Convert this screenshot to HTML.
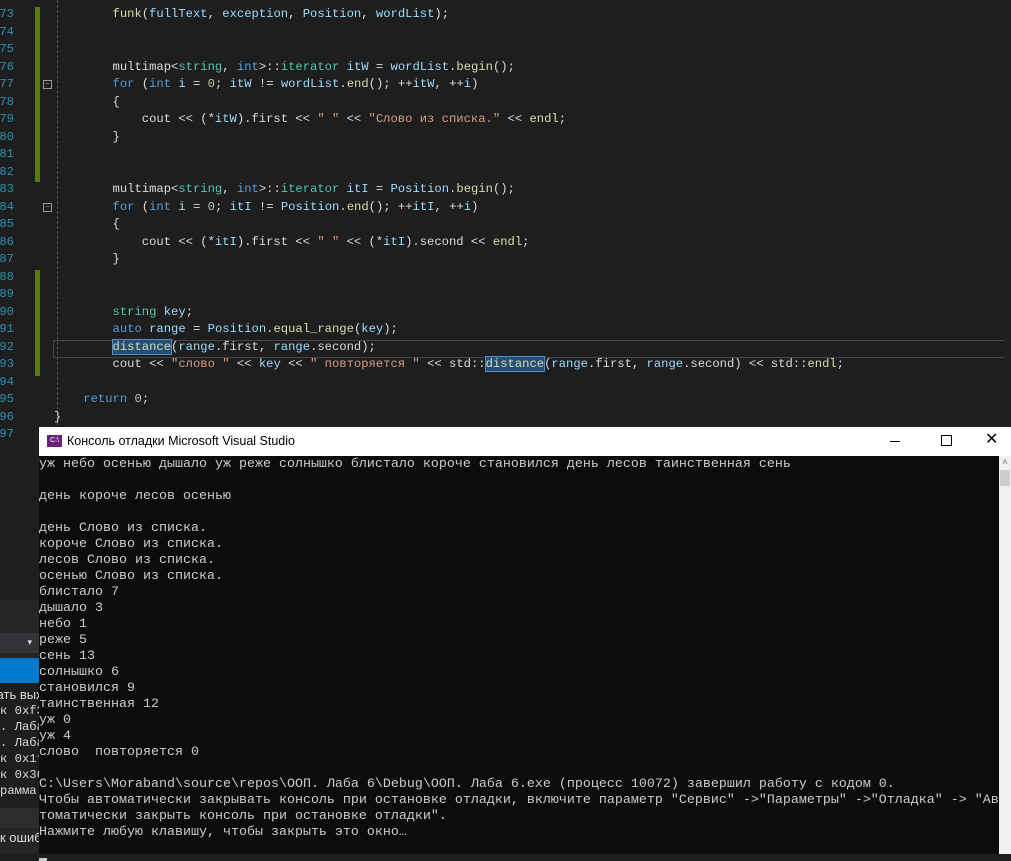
<!DOCTYPE html>
<html><head><meta charset="utf-8"><style>
body{margin:0;width:1011px;height:854px;background:#1e1e1e;overflow:hidden;position:relative;font-family:"Liberation Mono",monospace}
pre{margin:0;font-family:"Liberation Mono","DejaVu Sans Mono",monospace}
#ln{position:absolute;left:-30px;width:44px;top:-11.25px;text-align:right;color:#2b91af;font-size:12.2px;line-height:17.5px}
#code{position:absolute;left:54px;top:-11.25px;color:#dcdcdc;font-size:12.2px;line-height:17.5px}
.k{color:#569cd6}.s{color:#d69d85}.t{color:#4ec9b0}.v{color:#9cdcfe}.f{color:#dcdcaa}.n{color:#b5cea8}
.g{position:absolute;left:35px;width:5px;background:#587c0c}
.fold{position:absolute;left:43px;width:7px;height:7px;border:1px solid #999;color:#999;font-size:8px;line-height:7px;text-align:center}
.guide{position:absolute;left:57px;border-left:1px dashed #555}
.sel{background:#264f78;outline:1px solid #5a8ac0}
#cur{position:absolute;left:53px;top:340px;width:950px;height:16px;border:1px solid #464646;border-right:none}
#con{position:absolute;left:39px;top:427px;width:972px;height:427px;background:#0c0c0c}
#tb{position:absolute;left:0;top:0;width:972px;height:29px;background:#fff;font-family:"Liberation Sans",sans-serif;font-size:12.5px;color:#000}
#out{position:absolute;left:0;top:30px;color:#cccccc;font-size:13.33px;line-height:16px;white-space:pre}
#sb{position:absolute;left:960px;top:29px;width:12px;height:398px;background:#f0f0f0}
#left div{position:absolute;left:0;width:39px;overflow:hidden;white-space:nowrap}
</style></head><body>
<pre id="ln">172
173
174
175
176
177
178
179
180
181
182
183
184
185
186
187
188
189
190
191
192
193
194
195
196
197</pre>
<div class="g" style="top:7px;height:175px"></div>
<div class="g" style="top:270px;height:106px"></div>
<div class="guide" style="top:0;height:425px"></div>
<div class="fold" style="top:80px">−</div>
<div class="fold" style="top:203px">−</div>
<div id="cur"></div>
<pre id="code">

        <span class="f">funk</span>(<span class="v">fullText</span>, <span class="v">exception</span>, <span class="v">Position</span>, <span class="v">wordList</span>);


        multimap&lt;<span class="t">string</span>, <span class="k">int</span>&gt;::<span class="t">iterator</span> <span class="v">itW</span> = <span class="v">wordList</span>.<span class="f">begin</span>();
        <span class="k">for</span> (<span class="k">int</span> <span class="v">i</span> = <span class="n">0</span>; <span class="v">itW</span> != <span class="v">wordList</span>.<span class="f">end</span>(); ++<span class="v">itW</span>, ++<span class="v">i</span>)
        {
            cout &lt;&lt; (*<span class="v">itW</span>).first &lt;&lt; <span class="s">" "</span> &lt;&lt; <span class="s">"Слово из списка."</span> &lt;&lt; <span class="f">endl</span>;
        }


        multimap&lt;<span class="t">string</span>, <span class="k">int</span>&gt;::<span class="t">iterator</span> <span class="v">itI</span> = <span class="v">Position</span>.<span class="f">begin</span>();
        <span class="k">for</span> (<span class="k">int</span> <span class="v">i</span> = <span class="n">0</span>; <span class="v">itI</span> != <span class="v">Position</span>.<span class="f">end</span>(); ++<span class="v">itI</span>, ++<span class="v">i</span>)
        {
            cout &lt;&lt; (*<span class="v">itI</span>).first &lt;&lt; <span class="s">" "</span> &lt;&lt; (*<span class="v">itI</span>).second &lt;&lt; <span class="f">endl</span>;
        }


        <span class="t">string</span> <span class="v">key</span>;
        <span class="k">auto</span> <span class="v">range</span> = <span class="v">Position</span>.<span class="f">equal_range</span>(<span class="v">key</span>);
        <span class="f sel">distance</span>(<span class="v">range</span>.first, <span class="v">range</span>.second);
        cout &lt;&lt; <span class="s">"слово "</span> &lt;&lt; <span class="v">key</span> &lt;&lt; <span class="s">" повторяется "</span> &lt;&lt; std::<span class="f sel">distance</span>(<span class="v">range</span>.first, <span class="v">range</span>.second) &lt;&lt; std::<span class="f">endl</span>;

    <span class="k">return</span> <span class="n">0</span>;
}
</pre>
<div id="left">
<div style="top:600px;height:33px;background:#252526"></div>
<div style="top:633px;height:20px;background:#333337;color:#ddd;font-size:9px;text-align:right"><span style="margin-right:7px;line-height:20px">▾</span></div>
<div style="top:653px;height:5px;background:#252526"></div>
<div style="top:658px;height:25px;background:#007acc"></div>
<div style="top:683px;height:125px;background:#1e1e1e;color:#dcdcdc;font-size:13px;line-height:16px;padding-top:4px;font-family:'Liberation Sans',sans-serif"><span style="margin-left:-39px">Показать вых</span></div>
<div style="top:703px;height:105px;color:#dcdcdc;font-size:12.2px;line-height:16px;font-family:'Liberation Mono',monospace">к 0xf3<br>. Лаба<br>. Лаба<br>к 0x1f<br>к 0x36<br>рамма</div>
<div style="top:808px;height:20px;background:#2d2d30"></div>
<div style="top:828px;height:26px;background:#252526;color:#dcdcdc;font-size:13px;line-height:20px;font-family:'Liberation Sans',sans-serif">к ошиб</div>
</div>
<div id="con">
<div id="tb">
<div style="position:absolute;left:8px;top:8px;width:15px;height:12px;background:#68217a;color:#fff;font-size:7px;line-height:12px;text-align:center">C:\</div>
<div style="position:absolute;left:28px;top:7px">Консоль отладки Microsoft Visual Studio</div>
<div style="position:absolute;left:851px;top:14px;width:10px;border-top:1px solid #000"></div>
<div style="position:absolute;left:902px;top:8px;width:9px;height:9px;border:1px solid #000"></div>
<div style="position:absolute;left:946px;top:4px;font-size:16px;line-height:18px">✕</div>
</div>
<div id="sb"><div style="font-size:9px;color:#666;text-align:center;line-height:14px">˄</div><div style="margin:0 1px;height:16px;background:#cdcdcd"></div></div>
<div id="out">уж небо осенью дышало уж реже солнышко блистало короче становился день лесов таинственная сень

день короче лесов осенью

день Слово из списка.
короче Слово из списка.
лесов Слово из списка.
осенью Слово из списка.
блистало 7
дышало 3
небо 1
реже 5
сень 13
солнышко 6
становился 9
таинственная 12
уж 0
уж 4
слово  повторяется 0

C:\Users\Moraband\source\repos\ООП. Лаба 6\Debug\ООП. Лаба 6.exe (процесс 10072) завершил работу с кодом 0.
Чтобы автоматически закрывать консоль при остановке отладки, включите параметр "Сервис" -&gt;"Параметры" -&gt;"Отладка" -&gt; "Ав
томатически закрыть консоль при остановке отладки".
Нажмите любую клавишу, чтобы закрыть это окно…
<span style="display:inline-block;width:8px;height:3px;background:#ccc;vertical-align:-10px"></span></div>
</div>
</body></html>
